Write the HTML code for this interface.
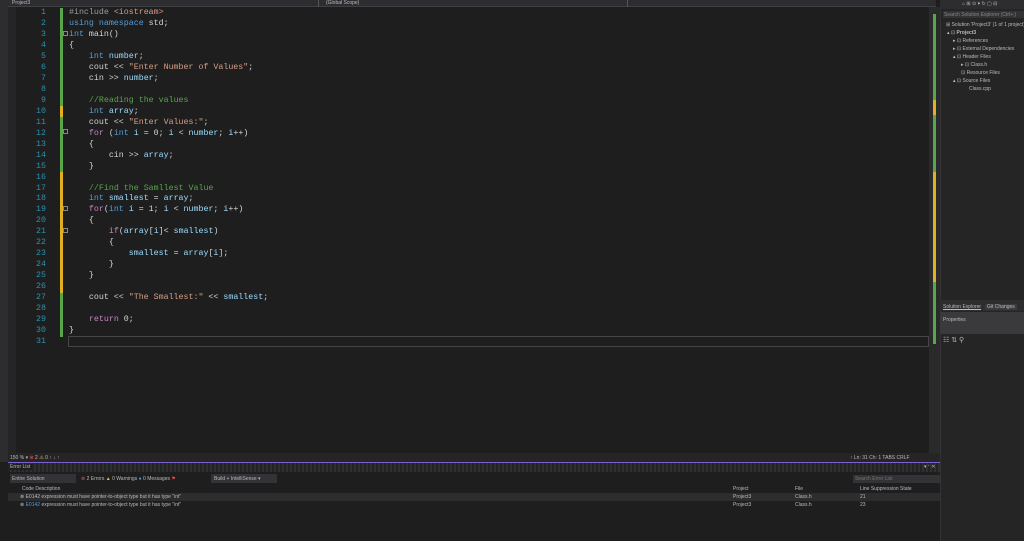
<!DOCTYPE html>
<html><head><meta charset="utf-8"><style>
*{margin:0;padding:0;box-sizing:border-box}
body{width:1024px;height:541px;background:#1e1e1e;overflow:hidden;position:relative;font-family:"Liberation Sans",sans-serif;color:#ccc}
.a{position:absolute}
.code{font-family:"Liberation Mono",monospace;font-size:8.3px;white-space:pre;color:#d4d4d4}
.k{color:#569cd6}.c{color:#c586c0}.s{color:#d69d85}.cm{color:#57a64a}.v{color:#9cdcfe}.g{color:#9b9b9b}
.sm{font-size:5px;color:#bbb;white-space:nowrap}
</style></head><body>
<div class="a" style="left:0;top:0;width:8px;height:462px;background:#2d2d30"></div>
<div class="a" style="left:8px;top:7px;width:8px;height:450px;background:#252526"></div>
<div class="a" style="left:8px;top:0;width:928px;height:7px;background:#2d2d30;border-bottom:1px solid #3f3f46"></div>
<div class="a sm" style="left:12px;top:0">Project3</div>
<div class="a sm" style="left:326px;top:0">(Global Scope)</div>
<div class="a" style="left:318px;top:0;width:1px;height:7px;background:#555"></div>
<div class="a" style="left:627px;top:0;width:1px;height:7px;background:#555"></div>
<div class="a" style="left:60px;top:8px;width:3px;height:99px;background:#57a64a"></div>
<div class="a" style="left:60px;top:106px;width:3px;height:11px;background:#e0b020"></div>
<div class="a" style="left:60px;top:117px;width:3px;height:55px;background:#57a64a"></div>
<div class="a" style="left:60px;top:172px;width:3px;height:121px;background:#e0b020"></div>
<div class="a" style="left:60px;top:293px;width:3px;height:44px;background:#57a64a"></div>
<div class="a" style="left:68px;top:336px;width:861px;height:11px;border:1px solid #464646"></div>
<div class="a code" style="left:69px;top:8px;line-height:10.97px"><span class="g">#include</span> <span class="s">&lt;iostream&gt;</span>
<span class="k">using namespace</span> std;
<span class="k">int</span> main()
{
    <span class="k">int</span> <span class="v">number</span>;
    cout &lt;&lt; <span class="s">"Enter Number of Values"</span>;
    cin &gt;&gt; <span class="v">number</span>;

    <span class="cm">//Reading the values</span>
    <span class="k">int</span> <span class="v">array</span>;
    cout &lt;&lt; <span class="s">"Enter Values:"</span>;
    <span class="c">for</span> (<span class="k">int</span> <span class="v">i</span> = 0; <span class="v">i</span> &lt; <span class="v">number</span>; <span class="v">i</span>++)
    {
        cin &gt;&gt; <span class="v">array</span>;
    }

    <span class="cm">//Find the Samllest Value</span>
    <span class="k">int</span> <span class="v">smallest</span> = <span class="v">array</span>;
    <span class="c">for</span>(<span class="k">int</span> <span class="v">i</span> = 1; <span class="v">i</span> &lt; <span class="v">number</span>; <span class="v">i</span>++)
    {
        <span class="c">if</span>(<span class="v">array</span>[<span class="v">i</span>]&lt; <span class="v">smallest</span>)
        {
            <span class="v">smallest</span> = <span class="v">array</span>[<span class="v">i</span>];
        }
    }

    cout &lt;&lt; <span class="s">"The Smallest:"</span> &lt;&lt; <span class="v">smallest</span>;

    <span class="c">return</span> 0;
}
</div>
<div class="a" style="left:20px;top:8px;line-height:10.97px;width:26px;text-align:right;color:#2b91af;font-family:'Liberation Mono',monospace;font-size:8.3px;white-space:pre">1
2
3
4
5
6
7
8
9
10
11
12
13
14
15
16
17
18
19
20
21
22
23
24
25
26
27
28
29
30
31</div>
<div class="a" style="left:63px;top:31px;width:5px;height:5px;border:1px solid #888"></div>
<div class="a" style="left:63px;top:129px;width:5px;height:5px;border:1px solid #888"></div>
<div class="a" style="left:63px;top:206px;width:5px;height:5px;border:1px solid #888"></div>
<div class="a" style="left:63px;top:228px;width:5px;height:5px;border:1px solid #888"></div>
<div class="a" style="left:929px;top:7px;width:11px;height:450px;background:#2a2a2a"></div>
<div class="a" style="left:933px;top:14px;width:3px;height:330px;background:#57a64a"></div>
<div class="a" style="left:933px;top:100px;width:3px;height:15px;background:#e0b020"></div>
<div class="a" style="left:933px;top:172px;width:3px;height:110px;background:#e0b020"></div>
<div class="a" style="left:940px;top:0;width:84px;height:541px;background:#252526;border-left:1px solid #333"></div>
<div class="a" style="left:940px;top:0;width:84px;height:9px;background:#2d2d30"></div>
<div class="a sm" style="left:962px;top:1px">⌂ ⊞ ⊙ ▾ ↻ ▢ ⊟</div>
<div class="a" style="left:943px;top:11px;width:81px;height:7px;background:#333337"></div>
<div class="a sm" style="left:944px;top:12px;color:#888">Search Solution Explorer (Ctrl+;)</div>
<div class="a sm" style="left:946px;top:22px">⊞ Solution 'Project3' (1 of 1 project)</div>
<div class="a sm" style="left:947px;top:30px">▴ ⊡ <b>Project3</b></div>
<div class="a sm" style="left:953px;top:38px">▸ ⊡ References</div>
<div class="a sm" style="left:953px;top:46px">▸ ⊡ External Dependencies</div>
<div class="a sm" style="left:953px;top:54px">▴ ⊡ Header Files</div>
<div class="a sm" style="left:961px;top:62px">▸ ⊡ Class.h</div>
<div class="a sm" style="left:961px;top:70px">⊡ Resource Files</div>
<div class="a sm" style="left:953px;top:78px">▴ ⊡ Source Files</div>
<div class="a sm" style="left:969px;top:86px">Class.cpp</div>
<div class="a" style="left:940px;top:300px;width:84px;height:11px;background:#2d2d30"></div>
<div class="a sm" style="left:943px;top:304px;text-decoration:underline">Solution Explorer</div>
<div class="a sm" style="left:985px;top:304px;background:#3a3a3a;padding:0 2px">Git Changes</div>
<div class="a" style="left:940px;top:312px;width:84px;height:22px;background:#3a3a3d"></div>
<div class="a sm" style="left:943px;top:317px">Properties</div>
<div class="a sm" style="left:943px;top:336px;font-size:7px">☷ ⇅ ⚲</div>
<div class="a" style="left:8px;top:453px;width:932px;height:10px;background:#252526"></div>
<div class="a sm" style="left:10px;top:455px">150 %   ▾    <span style="color:#e05050">⊗</span> 2    <span style="color:#e0c040">⚠</span> 0     ↑   ↓     ↑</div>
<div class="a sm" style="left:850px;top:455px">↑   Ln: 31    Ch: 1    TABS    CRLF</div>
<div class="a" style="left:8px;top:462px;width:932px;height:1px;background:#7a60d0"></div>
<div class="a" style="left:8px;top:463px;width:932px;height:78px;background:#1e1e1e"></div>
<div class="a" style="left:8px;top:463px;width:932px;height:9px;background:repeating-linear-gradient(90deg,#232323 0 2px,#303030 2px 4px)"></div>
<div class="a sm" style="left:10px;top:464px;background:#1e1e1e;padding-right:2px">Error List</div>
<div class="a sm" style="left:924px;top:464px">▾ ᐩ ✕</div>
<div class="a" style="left:10px;top:474px;width:66px;height:9px;background:#333337"></div>
<div class="a sm" style="left:12px;top:476px">Entire Solution</div>
<div class="a sm" style="left:81px;top:476px"><span style="color:#e05050">⊗</span> 2 Errors   <span style="color:#e0c040">▲</span> 0 Warnings   <span style="color:#4a9de0">●</span> 0 Messages   <span style="color:#e05050">⚑</span></div>
<div class="a" style="left:211px;top:474px;width:66px;height:9px;background:#333337"></div>
<div class="a sm" style="left:214px;top:476px">Build + IntelliSense   ▾</div>
<div class="a" style="left:853px;top:475px;width:87px;height:8px;background:#333337"></div>
<div class="a sm" style="left:855px;top:476px;color:#777">Search Error List</div>
<div class="a sm" style="left:22px;top:486px">Code    Description</div>
<div class="a sm" style="left:795px;top:486px">File</div>
<div class="a sm" style="left:860px;top:486px">Line  Suppression State</div>
<div class="a" style="left:8px;top:493px;width:932px;height:8px;background:#2d2d30"></div>
<div class="a sm" style="left:20px;top:494px">⊗ E0142   expression must have pointer-to-object type but it has type "int"</div>
<div class="a sm" style="left:20px;top:502px">⊗ <span style="color:#569cd6">E0142</span>   expression must have pointer-to-object type but it has type "int"</div>
<div class="a sm" style="left:733px;top:486px">Project</div>
<div class="a sm" style="left:733px;top:494px">Project3</div>
<div class="a sm" style="left:733px;top:502px">Project3</div>
<div class="a sm" style="left:795px;top:494px">Class.h</div>
<div class="a sm" style="left:795px;top:502px">Class.h</div>
<div class="a sm" style="left:860px;top:494px">21</div>
<div class="a sm" style="left:860px;top:502px">23</div>
</body></html>
